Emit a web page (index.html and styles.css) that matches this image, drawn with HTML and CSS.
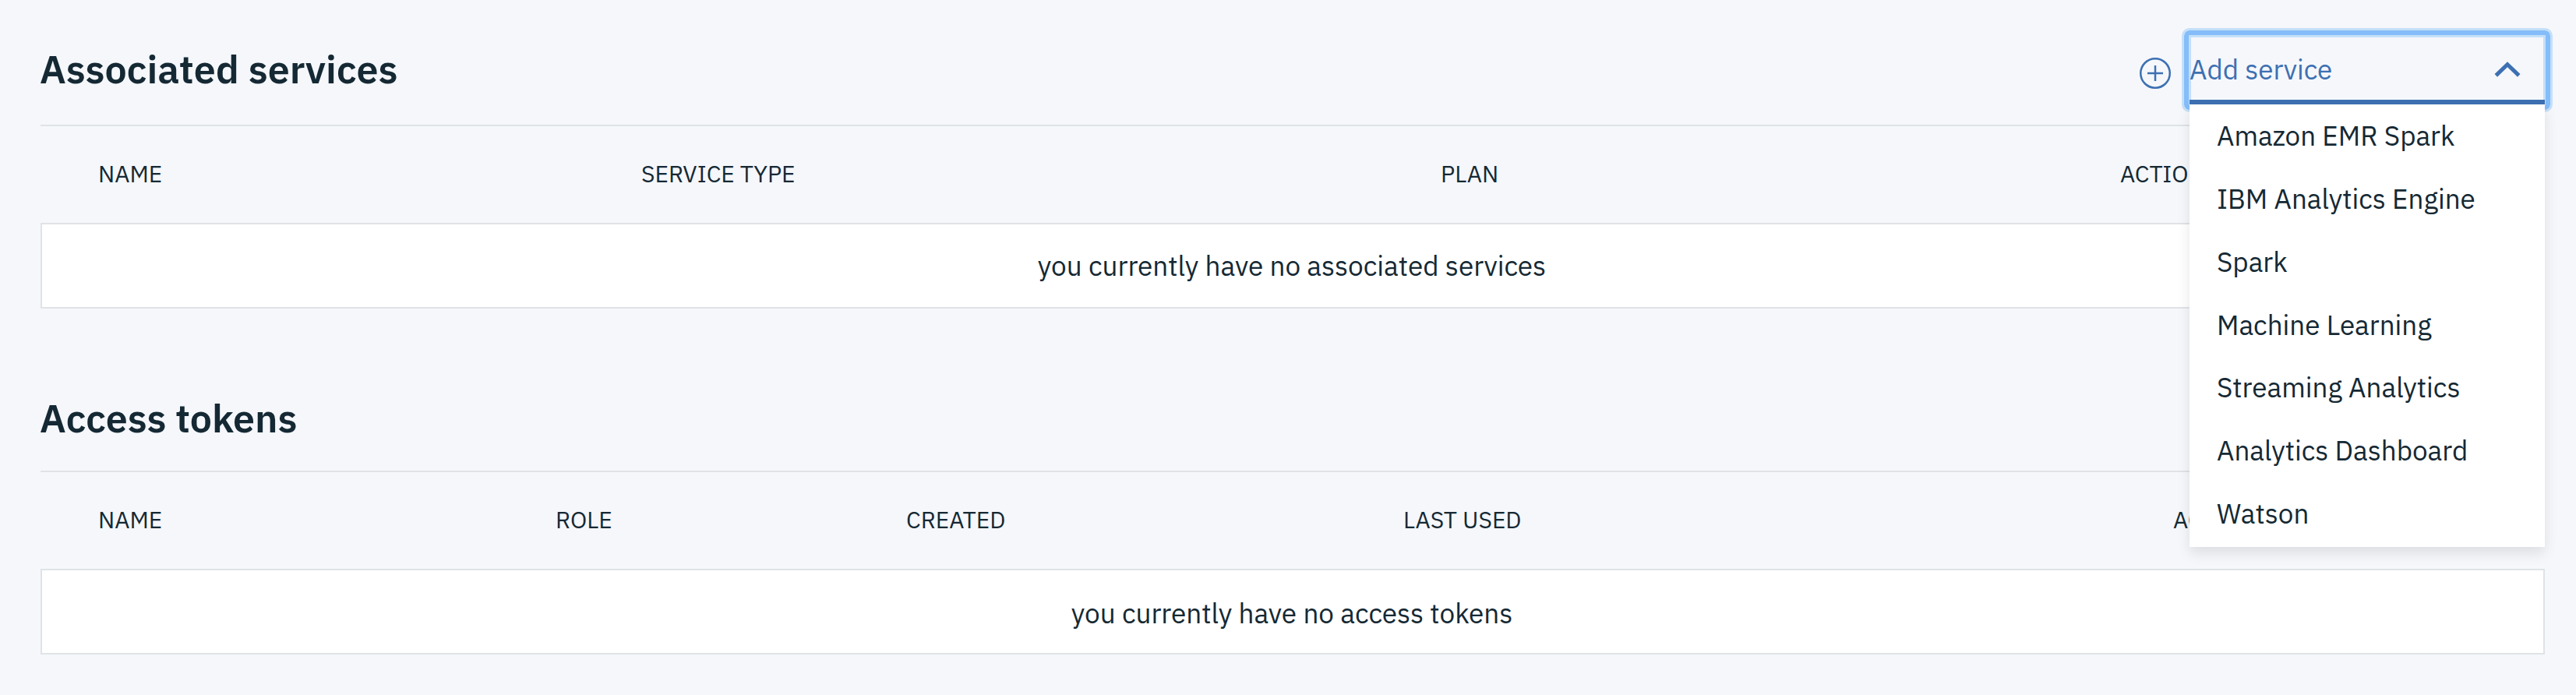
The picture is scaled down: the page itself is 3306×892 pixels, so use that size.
FILE: index.html
```html
<!DOCTYPE html>
<html lang="en">
<head>
<meta charset="utf-8">
<title>Project settings</title>
<link rel="stylesheet" href="styles.css">
</head>
<body>
<main class="page">
  <section class="panel">
    <header class="panel-head">
      <h2 class="panel-title">Associated services</h2>
      <div class="add">
        <svg class="add-icon" viewBox="0 0 42 42" fill="none" stroke="currentColor" stroke-width="2.5">
          <circle cx="21" cy="21" r="18.75"/>
          <path d="M21 11v20M11 21h20"/>
        </svg>
        <div class="dropdown">
          <button class="dropdown-toggle" type="button">
            <span>Add service</span>
            <svg class="chevron" viewBox="0 0 34 20" fill="none" stroke="currentColor" stroke-width="5"><path d="M2.3 17.9 17 3.7 31.7 17.9"/></svg>
          </button>
          <ul class="menu">
            <li class="menu-item">Amazon EMR Spark</li>
            <li class="menu-item">IBM Analytics Engine</li>
            <li class="menu-item">Spark</li>
            <li class="menu-item">Machine Learning</li>
            <li class="menu-item">Streaming Analytics</li>
            <li class="menu-item">Analytics Dashboard</li>
            <li class="menu-item">Watson</li>
          </ul>
        </div>
      </div>
    </header>
    <div class="columns columns-services">
      <span>NAME</span><span>SERVICE TYPE</span><span>PLAN</span><span>ACTION</span>
    </div>
    <div class="empty">you currently have no associated services</div>
  </section>
  <section class="panel">
    <header class="panel-head panel-head-tokens">
      <h2 class="panel-title">Access tokens</h2>
    </header>
    <div class="columns columns-tokens">
      <span>NAME</span><span>ROLE</span><span>CREATED</span><span>LAST USED</span><span>ACTION</span>
    </div>
    <div class="empty empty-tokens">you currently have no access tokens</div>
  </section>
</main>
</body>
</html>
```
FILE: styles.css
```css
* { box-sizing: border-box; }

body {
  margin: 0;
  background: #f5f7fb;
  color: #152934;
  font-family: "IBM Plex Sans", Roboto, sans-serif;
  font-size: 35px;
}

.page { padding: 0 40px 0 52px; }

.panel-head {
  display: flex;
  justify-content: space-between;
  align-items: flex-start;
  height: 162px;
  border-bottom: 2px solid #dfe3e6;
}

.panel-head-tokens { height: 210px; }

.panel-title {
  margin: 59px 0 0 -1px;
  font-size: 50.2px;
  font-weight: 600;
  line-height: 60px;
}

.panel-head-tokens .panel-title { margin-top: 111px; }

.add {
  display: flex;
  padding-top: 46px;
  color: #3d70b2;
}

.add-icon {
  width: 42px;
  height: 42px;
  margin: 27px 23px 0 0;
}

.dropdown {
  position: relative;
  width: 456px;
}

.dropdown-toggle {
  position: relative;
  display: flex;
  justify-content: space-between;
  align-items: center;
  width: 100%;
  height: 88px;
  padding: 4px 31px 0 0;
  border: 0;
  border-bottom: 6px solid #3d70b2;
  background: transparent;
  color: inherit;
  font: inherit;
}

/* Focus ring: pale edges on both sides of a solid band. */
.dropdown-toggle::before {
  content: "";
  position: absolute;
  z-index: -1;
  inset: -10px -10px -16px;
  border: 3px solid #c5dff8;
  border-radius: 10px;
  box-shadow: inset 0 0 0 6px #84bdf9, inset 0 0 0 9px #c5dff8;
}

.chevron {
  width: 34px;
  height: 20px;
}

.menu {
  position: absolute;
  top: 88px;
  left: 0;
  display: flex;
  flex-direction: column;
  width: 456px;
  height: 568px;
  margin: 0;
  padding: 0 0 3px;
  background: #fff;
  box-shadow: 0 8px 16px rgba(0, 0, 0, 0.1);
  color: #152934;
  list-style: none;
}

.menu-item {
  display: flex;
  flex: 1;
  align-items: center;
  padding-left: 35px;
}

.columns {
  display: grid;
  align-items: center;
  height: 124px;
  padding: 0 0 4px 74px;
  font-size: 30px;
}

.columns-services { grid-template-columns: 697px 1026px 872px 1fr; }
.columns-tokens { grid-template-columns: 587px 450px 638px 988px 1fr; }

.empty {
  display: flex;
  justify-content: center;
  align-items: center;
  height: 110px;
  padding-right: 2px;
  border: 2px solid #dfe3e6;
  background: #fff;
  font-size: 35.1px;
}

.empty-tokens { padding-top: 4px; }
```
